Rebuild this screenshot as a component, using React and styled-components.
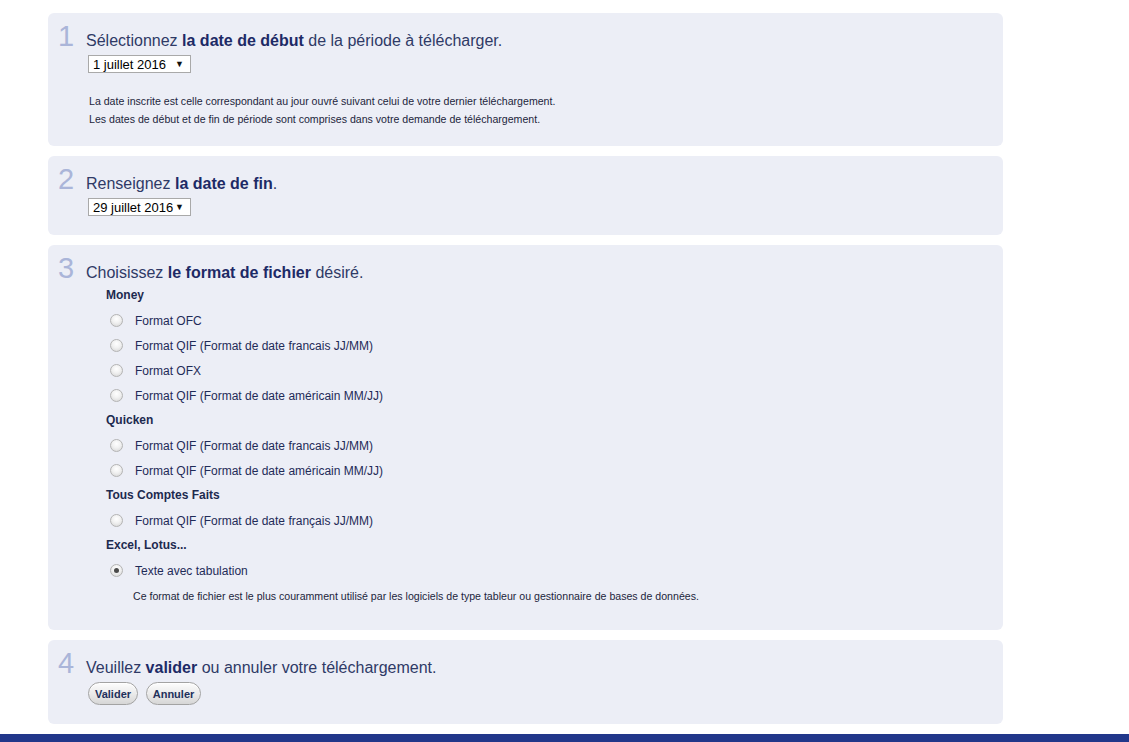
import React from "react";
import styled, { createGlobalStyle } from "styled-components";

const Global = createGlobalStyle`
  html, body { margin: 0; padding: 0; background: #fff; overflow: hidden; }
  body { font-family: "Liberation Sans", Arial, sans-serif; }
`;

const Page = styled.div`
  display: flex;
  flex-direction: column;
`;

const Steps = styled.div`
  display: flex;
  flex-direction: column;
  gap: 10px;
  width: 955px;
  padding: 13px 0 10px 48px;
`;

const Panel = styled.section`
  background: #eceef6;
  border-radius: 6px;
  padding: 8px 12px ${(p) => p.$pb}px 10px;
`;

const HeadRow = styled.div`
  display: flex;
  align-items: baseline;
  height: 30px;
`;

const Num = styled.span`
  width: 28px;
  font-size: 29px;
  line-height: 30px;
  color: #aab5d9;
  font-weight: 300;
`;

const Heading = styled.h2`
  margin: 0;
  font-size: 16px;
  font-weight: normal;
  color: #2f3a66;
  line-height: 30px;
  b { color: #1d2a66; font-weight: bold; }
`;

const Body = styled.div`
  padding-left: 30px;
  margin-top: 4px;
`;

const FakeSelect = styled.div`
  box-sizing: border-box;
  display: flex;
  align-items: center;
  justify-content: space-between;
  width: 103px;
  height: 18px;
  padding: 0 6px 0 4px;
  background: #fff;
  border: 1px solid #a9a9a9;
  font-size: 13px;
  color: #000;
`;

const Arrow = styled.span`
  font-size: 9px;
  color: #111;
`;

const Notes = styled.div`
  margin-top: 19px;
  padding-left: 1px;
  font-size: 10.6px;
  line-height: 18px;
  color: #1c1f3c;
`;

const Formats = styled.div`
  padding-left: 48px;
`;

const GroupLabel = styled.div`
  font-size: 12px;
  font-weight: bold;
  line-height: 25px;
  color: #1d2a4f;
`;

const Option = styled.label`
  display: flex;
  align-items: center;
  height: 25px;
  padding-left: 4px;
  font-size: 12px;
  color: #1f2b58;
`;

const Radio = styled.span`
  box-sizing: border-box;
  width: 13px;
  height: 13px;
  margin-right: 12px;
  border-radius: 50%;
  border: 1px solid #b4b4b4;
  background: radial-gradient(circle at 50% 35%, #ffffff 0%, #f1f1f1 45%, #d3d3d3 100%);
  display: flex;
  align-items: center;
  justify-content: center;
  &::after {
    content: "";
    width: 5px;
    height: 5px;
    border-radius: 50%;
    background: ${(p) => (p.$checked ? "#4a4a4a" : "transparent")};
  }
`;

const Description = styled.div`
  margin-top: 4px;
  padding-left: 27px;
  font-size: 10.6px;
  line-height: 18px;
  color: #1c1f3c;
`;

const Buttons = styled.div`
  display: flex;
  gap: 8px;
  margin-top: 1px;
`;

const Btn = styled.button`
  box-sizing: border-box;
  height: 23px;
  width: ${(p) => p.$w}px;
  padding: 0;
  border: 1px solid #a3a3a3;
  border-radius: 12px;
  background: linear-gradient(#fdfdfd, #e9e9e9 55%, #d6d6d6);
  font-family: "Liberation Sans", Arial, sans-serif;
  font-size: 11px;
  font-weight: bold;
  color: #22305c;
  box-shadow: inset 0 1px 0 #fff;
`;

const Footer = styled.div`
  height: 20px;
  background: #21378a;
`;

const groups = [
  {
    name: "Money",
    options: [
      "Format OFC",
      "Format QIF (Format de date francais JJ/MM)",
      "Format OFX",
      "Format QIF (Format de date américain MM/JJ)",
    ],
  },
  {
    name: "Quicken",
    options: [
      "Format QIF (Format de date francais JJ/MM)",
      "Format QIF (Format de date américain MM/JJ)",
    ],
  },
  {
    name: "Tous Comptes Faits",
    options: ["Format QIF (Format de date français JJ/MM)"],
  },
  {
    name: "Excel, Lotus...",
    options: ["Texte avec tabulation"],
    checked: 0,
  },
];

export default function App() {
  return (
    <Page>
      <Global />
      <Steps>
        <Panel $pb={18}>
          <HeadRow>
            <Num>1</Num>
            <Heading>
              Sélectionnez <b>la date de début</b> de la période à télécharger.
            </Heading>
          </HeadRow>
          <Body>
            <FakeSelect>
              <span>1 juillet 2016</span>
              <Arrow>▼</Arrow>
            </FakeSelect>
            <Notes>
              La date inscrite est celle correspondant au jour ouvré suivant celui de votre dernier téléchargement.
              <br />
              Les dates de début et de fin de période sont comprises dans votre demande de téléchargement.
            </Notes>
          </Body>
        </Panel>

        <Panel $pb={19}>
          <HeadRow>
            <Num>2</Num>
            <Heading>
              Renseignez <b>la date de fin</b>.
            </Heading>
          </HeadRow>
          <Body>
            <FakeSelect>
              <span>29 juillet 2016</span>
              <Arrow>▼</Arrow>
            </FakeSelect>
          </Body>
        </Panel>

        <Panel $pb={25}>
          <HeadRow>
            <Num>3</Num>
            <Heading>
              Choisissez <b>le format de fichier</b> désiré.
            </Heading>
          </HeadRow>
          <Formats>
            {groups.map((g) => (
              <div key={g.name}>
                <GroupLabel>{g.name}</GroupLabel>
                {g.options.map((o, i) => (
                  <Option key={i}>
                    <Radio $checked={g.checked === i} />
                    {o}
                  </Option>
                ))}
              </div>
            ))}
            <Description>
              Ce format de fichier est le plus couramment utilisé par les logiciels de type tableur ou gestionnaire de bases de données.
            </Description>
          </Formats>
        </Panel>

        <Panel $pb={19}>
          <HeadRow>
            <Num>4</Num>
            <Heading>
              Veuillez <b>valider</b> ou annuler votre téléchargement.
            </Heading>
          </HeadRow>
          <Body>
            <Buttons>
              <Btn $w={50}>Valider</Btn>
              <Btn $w={55}>Annuler</Btn>
            </Buttons>
          </Body>
        </Panel>
      </Steps>
      <Footer />
    </Page>
  );
}
